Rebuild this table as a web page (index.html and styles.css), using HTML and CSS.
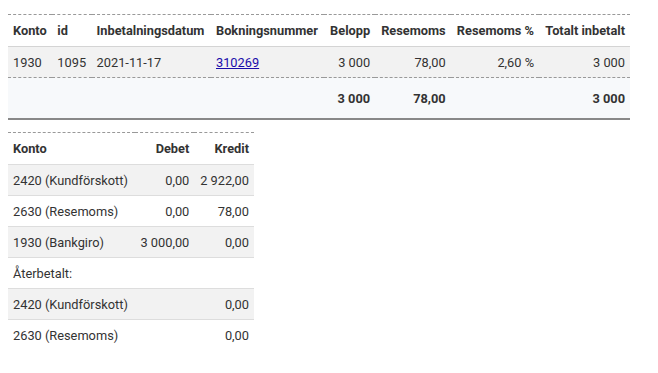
FILE: index.html
```html
<!DOCTYPE html>
<html>
<head>
<meta charset="utf-8">
<link rel="stylesheet" href="styles.css">
</head>
<body>
<table class="pay">
  <thead>
    <tr>
      <th>Konto</th><th>id</th><th>Inbetalningsdatum</th><th>Bokningsnummer</th>
      <th class="num">Belopp</th><th class="num">Resemoms</th><th class="num">Resemoms %</th><th class="num">Totalt inbetalt</th>
    </tr>
  </thead>
  <tbody>
    <tr>
      <td>1930</td><td>1095</td><td>2021-11-17</td><td><a href="#">310269</a></td>
      <td class="num">3 000</td><td class="num">78,00</td><td class="num">2,60 %</td><td class="num">3 000</td>
    </tr>
  </tbody>
  <tfoot>
    <tr>
      <td></td><td></td><td></td><td></td>
      <td class="num">3 000</td><td class="num">78,00</td><td></td><td class="num">3 000</td>
    </tr>
  </tfoot>
</table>

<table class="ledger">
  <thead>
    <tr><th>Konto</th><th class="num">Debet</th><th class="num">Kredit</th></tr>
  </thead>
  <tbody>
    <tr class="odd"><td>2420 (Kundförskott)</td><td class="num">0,00</td><td class="num">2 922,00</td></tr>
    <tr><td>2630 (Resemoms)</td><td class="num">0,00</td><td class="num">78,00</td></tr>
    <tr class="odd"><td>1930 (Bankgiro)</td><td class="num">3 000,00</td><td class="num">0,00</td></tr>
    <tr><td colspan="3">Återbetalt:</td></tr>
    <tr class="odd"><td>2420 (Kundförskott)</td><td></td><td class="num">0,00</td></tr>
    <tr><td>2630 (Resemoms)</td><td></td><td class="num">0,00</td></tr>
  </tbody>
</table>
</body>
</html>
```

FILE: styles.css
```css
body {
  margin: 14px 8px 8px;
  font-family: Roboto, "Liberation Sans", sans-serif;
  font-size: 12.8px;
  color: #333;
  background: #fff;
}
table {
  border-collapse: collapse;
  border-top: 1px dashed #999;
}
th, td {
  padding: 0 5px;
  height: 31px;
  text-align: left;
  white-space: nowrap;
}
th {
  font-weight: 700;
  color: #333;
}
.num { text-align: right; }

.pay { width: 622px; }
.pay thead th { height: 31px; border-bottom: 1px solid #d4d4d4; }
.pay tbody td { background: #f2f2f2; height: 30px; }
.pay tfoot td {
  background: #f7f9fb;
  border-top: 1px dashed #999;
  border-bottom: 2px solid #888;
  height: 40px;
  font-weight: 700;
}
.pay a { color: #1a0dab; }

.ledger { margin-top: 12px; width: 246px; }
.ledger thead th { height: 31px; border-bottom: 1px solid #ddd; }
.ledger tbody td { border-bottom: 1px solid #ddd; height: 30px; }
.ledger tbody tr:last-child td { border-bottom: none; }
.ledger tbody tr.odd td { background: #f2f2f2; }
```
